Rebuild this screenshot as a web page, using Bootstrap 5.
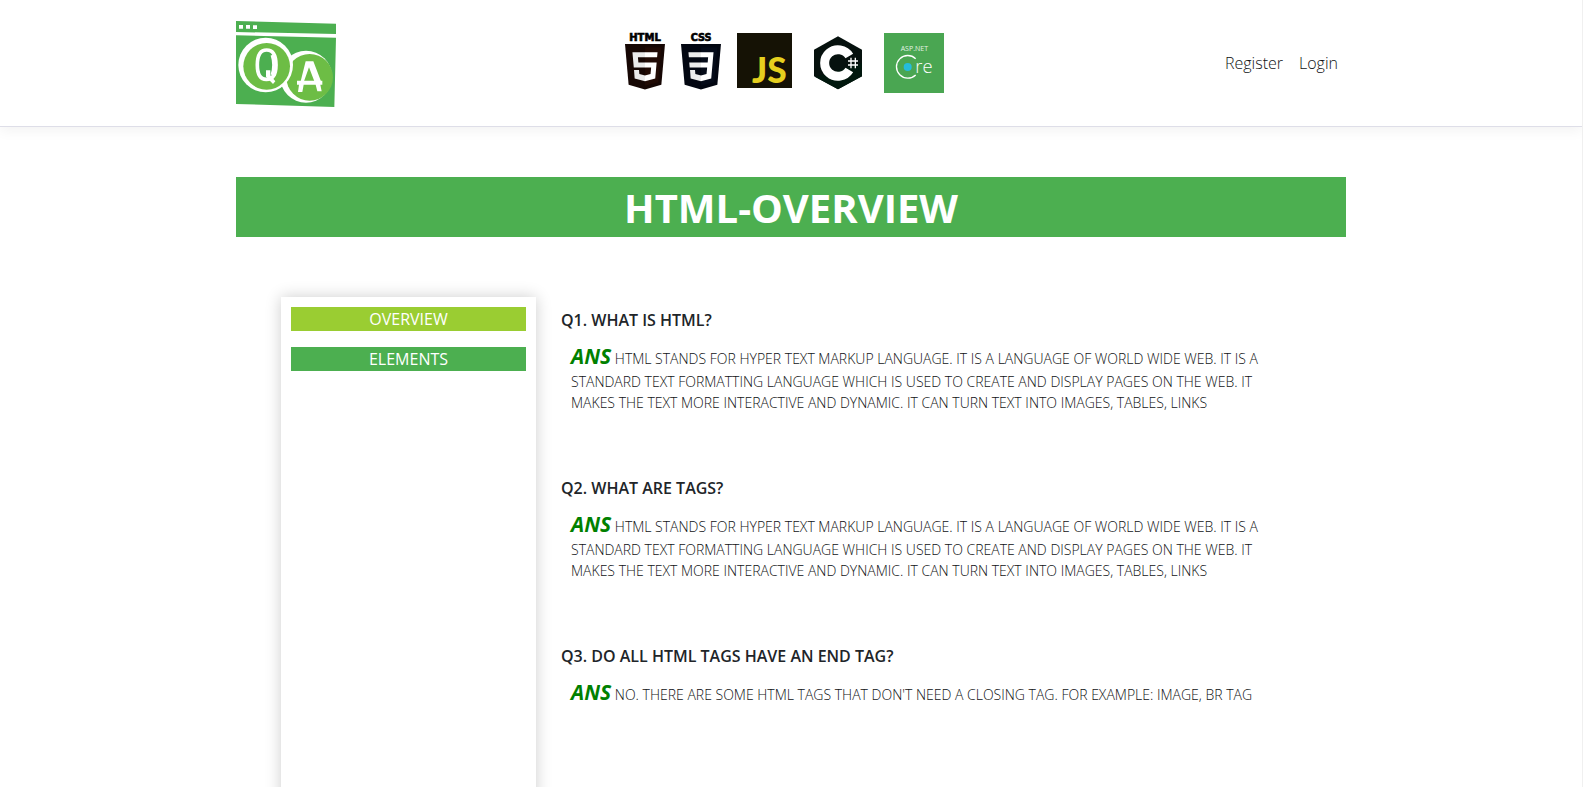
<!DOCTYPE html>
<html lang="en">
<head>
<meta charset="utf-8">
<meta name="viewport" content="width=device-width, initial-scale=1">
<title>HTML Overview - QA</title>
<link href="https://cdn.jsdelivr.net/npm/bootstrap@5.3.0/dist/css/bootstrap.min.css" rel="stylesheet">
<style>
  body { font-family: "Open Sans", "Noto Sans", sans-serif; color: #212529; border-right: 1px solid #f0f0f0; }
  .site-header { border-bottom: 1px solid #dedee8; box-shadow: 0 4px 12px rgba(0,0,0,.05); }
  .page-wrap { max-width: 1140px; padding-left: 15px; padding-right: 15px; }
  .header-row { padding-top: 20px; padding-bottom: 20px; }
  .header-row svg { display: block; overflow: visible; }
  .site-nav .nav-link { color: #101214; font-size: 16px; font-weight: 300; padding: 8px; }
  .page-title { background: #4caf50; font-size: 40px; line-height: 58px; padding-top: 2px; font-weight: 700; margin: 50px 0 60px; }
  .doc-row { margin: 0 30px; }
  .side-col { padding: 0 15px; flex: 0 0 285px; }
  .side-menu { padding: 10px; box-shadow: 0 0 15px rgba(0,0,0,.2); }
  .side-menu a { background: #4caf50; font-size: 16px; line-height: 24px; margin-bottom: 16px; }
  .side-menu a.current { background: #9acd32; }
  .doc-col { flex: 0 1 720px; padding: 11px 10px 0; }
  .qa-item { height: 168px; }
  .qa-item h2 { font-size: 16px; line-height: 24px; font-weight: 600; margin: 0 0 10px; }
  .qa-item p { color: #101214; font-size: 14px; font-weight: 300; line-height: 21px; padding-left: 10px; margin: 0; }
  .qa-item em { color: #008000; font-size: 21px; line-height: 29px; font-weight: 700; }
</style>
</head>
<body class="vh-100 d-flex flex-column overflow-hidden bg-white">
<header class="site-header">
  <div class="container page-wrap header-row d-flex justify-content-between align-items-center">
    <a href="#" aria-label="QA home">
      <svg width="100" height="86" viewBox="30 30 300 258">
        <path d="M30 33L330 41V72L30 66zM30 76L330 83L325 291L30 282z" fill="#4caf50"/>
        <path d="M39 45h12v11H39zM60 45h12v11H60zM81 46h12v11H81z" fill="#fff"/>
        <circle cx="240" cy="200" r="78" fill="#fff"/>
        <circle cx="251" cy="202" r="70" fill="#6dbd45"/>
        <circle cx="119" cy="165" r="82" fill="#fff"/>
        <circle cx="122" cy="169" r="70" fill="#6dbd45"/>
        <path d="M122 120C101 120 94 138 94 165S101 208 121 208S150 193 150 165S143 120 122 120z" fill="#4caf50" stroke="#fff" stroke-width="11"/>
        <path d="M141 134Q151 164 141 196" fill="none" stroke="#fff" stroke-width="15"/>
        <path d="M120 181h13v15l15 18-7 8-21-22z" fill="#fff"/>
        <path d="M239 154h23l23 60h-20l-16-42-15 42h-10z" fill="#fff"/>
        <path d="M213 212h76v12h-76zM219 224h14l-4 22h-13zM269 224h14l4 20h-13z" fill="#fff"/>
      </svg>
    </a>
    <nav class="d-flex gap-3 ms-3" aria-label="Topics">
      <a href="#" aria-label="HTML">
        <svg width="40" height="56" viewBox="0 0 120 168">
          <text x="60" y="24" text-anchor="middle" font-family="DejaVu Sans" font-weight="700" font-size="30" stroke="#000" stroke-width="2">HTML</text>
          <g transform="translate(-8 33) scale(.266)">
            <path d="M71 460L30 0H481L440 460L255 512z" fill="#160704"/><path d="M256 472l149-41L440 37H256z" fill="#210b05"/>
            <path d="M256 208H181l-5-58h80V94H114l15 171h127zM256 355l-64-17-4-45h-56l7 96 117 32z" fill="#ebebeb"/>
            <path d="M255 208v56h70l-7 73-63 18v66l116-32 16-181zM255 94v56h137l5-56z" fill="#fff"/>
          </g>
        </svg>
      </a>
      <a href="#" aria-label="CSS">
        <svg width="40" height="56" viewBox="0 0 120 168">
          <text x="60" y="24" text-anchor="middle" font-family="DejaVu Sans" font-weight="700" font-size="29" stroke="#000" stroke-width="2">CSS</text>
          <g transform="translate(-8 33) scale(.266)">
            <path d="M71 460L30 0H481L440 460L255 512z" fill="#020611"/><path d="M256 472l149-41L440 37H256z" fill="#050b19"/>
            <path d="M256 208H123l5 56h128zM256 94H114l5 56h137zM256 355l-64-17-4-45h-56l7 96 117 32z" fill="#ebebeb"/>
            <path d="M255 208v56h70l-7 73-63 18v66l116-32 26-295H255v56h81l-5 58z" fill="#fff"/>
          </g>
        </svg>
      </a>
      <a href="#" aria-label="JavaScript">
        <svg width="55" height="55" viewBox="0 0 165 165">
          <path d="M0 0h165v165H0z" fill="#151205"/>
          <text x="97" y="151" text-anchor="middle" font-family="Lato" font-weight="900" font-size="106" fill="#e5cf1e">JS</text>
        </svg>
      </a>
      <a href="#" aria-label="C#">
        <svg width="60" height="60" viewBox="0 0 180 180">
          <path d="M90 10l72 40v80l-72 39-72-39V50z" fill="#06110e"/>
          <path d="M162 90v40l-72 39-68-37z" fill="#00170d"/>
          <path d="M124 69A40 40 0 1 0 124 111" fill="none" stroke="#fff" stroke-width="27"/>
          <path d="M129 74v32M142 74v32M120 84h30M120 96h30" stroke="#fff" stroke-width="4"/>
        </svg>
      </a>
      <a href="#" aria-label="ASP.NET Core">
        <svg width="60" height="60" viewBox="0 0 180 180">
          <path d="M0 0h180v180H0z" fill="#4aa652"/>
          <text x="91" y="55" text-anchor="middle" font-family="Open Sans" font-size="21" fill="#e4f2e5">ASP.NET</text>
          <path d="M95 77A34 34 0 1 0 95 126" fill="none" stroke="#fff" stroke-width="4"/>
          <circle cx="71" cy="102" r="12" fill="#24bcdc"/>
          <text x="94" y="119" font-family="Open Sans" font-weight="300" font-size="55" fill="#fff">re</text>
        </svg>
      </a>
    </nav>
    <nav class="nav site-nav" aria-label="Account">
      <a class="nav-link" href="#">Register</a>
      <a class="nav-link" href="#">Login</a>
    </nav>
  </div>
</header>
<main class="container page-wrap flex-grow-1 d-flex flex-column">
  <h1 class="page-title text-white text-center">HTML-OVERVIEW</h1>
  <div class="doc-row d-flex flex-grow-1">
    <aside class="side-col d-flex">
      <nav class="side-menu w-100" aria-label="Chapters">
        <a class="current d-block text-white text-center text-decoration-none" href="#">OVERVIEW</a>
        <a class="d-block text-white text-center text-decoration-none" href="#">ELEMENTS</a>
      </nav>
    </aside>
    <div class="doc-col">
      <section class="qa-item">
        <h2>Q1. WHAT IS HTML?</h2>
        <p><em>ANS</em> HTML STANDS FOR HYPER TEXT MARKUP LANGUAGE. IT IS A LANGUAGE OF WORLD WIDE WEB. IT IS A STANDARD TEXT FORMATTING LANGUAGE WHICH IS USED TO CREATE AND DISPLAY PAGES ON THE WEB. IT MAKES THE TEXT MORE INTERACTIVE AND DYNAMIC. IT CAN TURN TEXT INTO IMAGES, TABLES, LINKS</p>
      </section>
      <section class="qa-item">
        <h2>Q2. WHAT ARE TAGS?</h2>
        <p><em>ANS</em> HTML STANDS FOR HYPER TEXT MARKUP LANGUAGE. IT IS A LANGUAGE OF WORLD WIDE WEB. IT IS A STANDARD TEXT FORMATTING LANGUAGE WHICH IS USED TO CREATE AND DISPLAY PAGES ON THE WEB. IT MAKES THE TEXT MORE INTERACTIVE AND DYNAMIC. IT CAN TURN TEXT INTO IMAGES, TABLES, LINKS</p>
      </section>
      <section class="qa-item">
        <h2>Q3. DO ALL HTML TAGS HAVE AN END TAG?</h2>
        <p><em>ANS</em> NO. THERE ARE SOME HTML TAGS THAT DON'T NEED A CLOSING TAG. FOR EXAMPLE: IMAGE, BR TAG</p>
      </section>
    </div>
  </div>
</main>
<script src="https://cdn.jsdelivr.net/npm/bootstrap@5.3.0/dist/js/bootstrap.bundle.min.js"></script>
</body>
</html>
